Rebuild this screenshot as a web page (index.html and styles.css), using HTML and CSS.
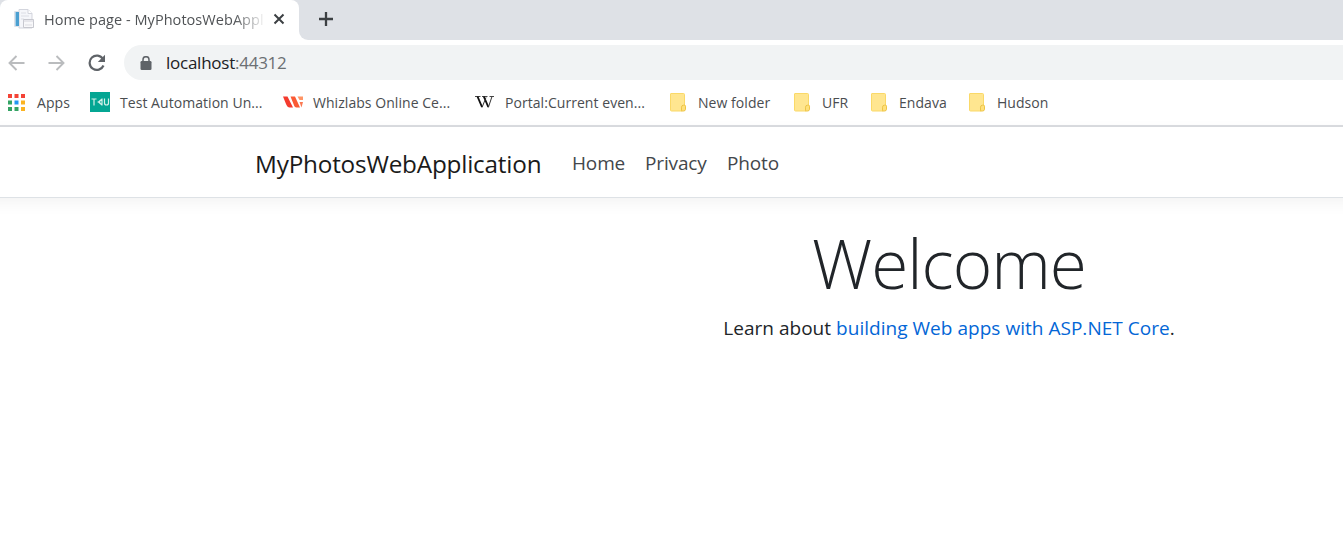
FILE: index.html
```html
<!DOCTYPE html>
<html lang="en">
<head>
<meta charset="utf-8">
<title>Home page - MyPhotosWebApplication</title>
<link rel="stylesheet" href="styles.css">
</head>
<body>
<div class="tabs">
  <div class="tab">
    <svg class="favicon" width="20" height="20" viewBox="0 0 20 20"><path d="M5 .5h9l4 4V19H5z" fill="#f5f6fa" stroke="#d3d5dd"/><path d="M14 .5v4h4" fill="#fff" stroke="#d3d5dd"/><path d="M7 4h5M7 7h8M7 10h3" stroke="#dcdee5"/><path d="M.5 2.500h4v15h-4z" fill="#fff" stroke="#dfe1e8"/><path d="M1.500 3h3.500v14H1.500z" fill="#4b9fd0"/><path d="M9.500 10.500h10v8h-10z" fill="#f8f8fa" stroke="#c7c8cf"/><path d="M9.500 12h10" stroke="#d4d4dc"/><path d="M11 16h7" stroke="#dddde2"/></svg>
    <span class="tab-title">Home page - MyPhotosWebAppl</span>
    <svg class="close" width="12" height="12" viewBox="0 0 12 12"><path d="M1.500 1.500l9 9M10.500 1.500l-9 9" stroke="#3c4043" stroke-width="2"/></svg>
  </div>
  <div class="strip"><svg width="16" height="16" viewBox="0 0 16 16"><path d="M8 1v14M1 8h14" stroke="#3c4043" stroke-width="2.300"/></svg></div>
</div>
<div class="toolbar">
  <svg class="arrow" width="18" height="18" viewBox="0 0 18 18"><path d="M16.500 9H2M8.500 2L1.500 9l7 7" fill="none" stroke="#babcbe" stroke-width="1.900"/></svg>
  <svg class="arrow forward" width="18" height="18" viewBox="0 0 18 18"><path d="M.5 9H15M8.500 2l7 7-7 7" fill="none" stroke="#babcbe" stroke-width="1.900"/></svg>
  <svg class="reload" width="18" height="18" viewBox="0 0 18 18"><path d="M15 5A7.200 7.200 0 1 0 15.500 11.500" fill="none" stroke="#5f6368" stroke-width="2.200"/><path d="M17 .8v7.200H9.800z" fill="#5f6368"/></svg>
  <div class="address">
    <svg width="12" height="14" viewBox="0 0 12 14"><path d="M3 6V3.700a3 3 0 0 1 6 0V6" fill="none" stroke="#5f6368" stroke-width="1.500"/><rect x=".5" y="5" width="11" height="9" rx="1.300" fill="#5f6368"/></svg>
    <span class="url">localhost<i>:44312</i></span>
  </div>
</div>
<div class="bookmarks">
  <div class="bm apps"><svg width="17" height="17" viewBox="0 0 17 17"><path d="M0 0h4v4H0zM6.500 0h4v4h-4zM13 0h4v4h-4z" fill="#f44336"/><path d="M0 6.500h4v4H0zM0 13h4v4H0zM6.500 13h4v4h-4z" fill="#34a364"/><path d="M6.500 6.500h4v4h-4z" fill="#2196f3"/><path d="M13 6.500h4v4h-4zM13 13h4v4h-4z" fill="#fbb321"/></svg><span>Apps</span></div>
  <div class="bm tau"><svg width="20" height="20" viewBox="0 0 20 20"><rect width="20" height="20" fill="#04a693"/><path d="M1.500 7h5M4 7v6.500M7.500 10h3M12 6.500v7M12 7L8.500 10l3.500 3M14.500 6.500V11q0 2 2 2t2-2V6.500" fill="none" stroke="#d5f0e9" stroke-width="1.200"/></svg><span>Test Automation Un...</span></div>
  <div class="bm whiz"><svg width="21" height="12" viewBox="0 0 21 12"><path d="M0 .5h4.500L10 11.500H6.500Q4.500 11.500 3 8z" fill="#f43b2e"/><path d="M7.500.5H12L17 11.500h-3.500Q11.500 11.500 10.500 8z" fill="#fa5a35"/><path d="M14.500.5H20v3.500h-3.500z" fill="#ff9565"/><path d="M16.500 6h3.500L18.500 11.500z" fill="#fb7952"/></svg><span>Whizlabs Online Ce...</span></div>
  <div class="bm wiki"><svg width="20" height="14" viewBox="0 0 20 14"><path d="M0 1.500h5.500M7 1.500h5.500M14.500 1.500H19" stroke="#333" stroke-width=".9"/><path d="M2.500 1.500l4.500 10.500M8.800 1.500l4.500 10.500" fill="none" stroke="#111" stroke-width="1.900"/><path d="M7 12.500l4-10M13.300 12.500L17 1.500" fill="none" stroke="#333"/></svg><span>Portal:Current even...</span></div>
  <div class="bm f1"><svg class="folder" width="17" height="19" viewBox="0 0 17 19"><path d="M1 .5h12.500q1 0 1 1v11.500L12 18H1.500q-1 0-1-1V1q0-.5.500-.5z" fill="#ffe690" stroke="#fad968"/><path d="M11.500 17.500v-3.300q0-2 2-2h1q1 0 1 1v3q0 1.800-2 1.800h-2z" fill="#ffe07a" stroke="#edc446"/></svg><span>New folder</span></div>
  <div class="bm f2"><svg class="folder" width="17" height="19" viewBox="0 0 17 19"><path d="M1 .5h12.500q1 0 1 1v11.500L12 18H1.500q-1 0-1-1V1q0-.5.500-.5z" fill="#ffe690" stroke="#fad968"/><path d="M11.500 17.500v-3.300q0-2 2-2h1q1 0 1 1v3q0 1.800-2 1.800h-2z" fill="#ffe07a" stroke="#edc446"/></svg><span>UFR</span></div>
  <div class="bm f3"><svg class="folder" width="17" height="19" viewBox="0 0 17 19"><path d="M1 .5h12.500q1 0 1 1v11.500L12 18H1.500q-1 0-1-1V1q0-.5.500-.5z" fill="#ffe690" stroke="#fad968"/><path d="M11.500 17.500v-3.300q0-2 2-2h1q1 0 1 1v3q0 1.800-2 1.800h-2z" fill="#ffe07a" stroke="#edc446"/></svg><span>Endava</span></div>
  <div class="bm f4"><svg class="folder" width="17" height="19" viewBox="0 0 17 19"><path d="M1 .5h12.500q1 0 1 1v11.500L12 18H1.500q-1 0-1-1V1q0-.5.500-.5z" fill="#ffe690" stroke="#fad968"/><path d="M11.500 17.500v-3.300q0-2 2-2h1q1 0 1 1v3q0 1.800-2 1.800h-2z" fill="#ffe07a" stroke="#edc446"/></svg><span>Hudson</span></div>
</div>
<header class="navbar">
  <a class="brand">MyPhotosWebApplication</a>
  <nav><a class="home">Home</a><a class="privacy">Privacy</a><a class="photo">Photo</a></nav>
</header>
<main>
  <h1>Welcome</h1>
  <p>Learn about <a>building Web apps with ASP.NET Core</a>.</p>
</main>
</body>
</html>
```
FILE: styles.css
```css
* { box-sizing: border-box; }
body { margin: 0; height: 557px; overflow: hidden; background: #fff; color: #212529; font-family: "Open Sans", "Noto Sans", sans-serif; white-space: nowrap; }
svg { display: block; flex: none; }
.tabs { display: flex; height: 40px; background: linear-gradient(#dee1e6 20px, #fff 20px); }
.tab { display: flex; align-items: center; width: 299px; padding: 0 0 2px 14px; background: #fff; border-radius: 8px 8px 0 0; }
.strip { flex: 1; display: flex; align-items: center; padding: 0 0 2px 19px; background: #dee1e6; border-bottom-left-radius: 9px; }
.tab-title { width: 220px; margin-left: 10px; overflow: hidden; font-size: 14.500px; letter-spacing: .05px; color: #505356; -webkit-mask-image: linear-gradient(90deg, #000 190px, transparent 222px); }
.close { margin-left: 9px; }
.toolbar { display: flex; align-items: center; height: 45px; padding-left: 8px; }
.forward { margin-left: 22px; }
.reload { margin-left: 22px; }
.address { display: flex; align-items: center; flex: 1; height: 35px; margin-left: 18px; padding-left: 16px; background: #f1f3f4; border-radius: 18px 0 0 18px; }
.url { margin-left: 14px; font-size: 17px; letter-spacing: -.25px; color: #202124; }
.url i { font-style: normal; color: #6b6f73; }
.bookmarks { display: flex; height: 42px; padding: 0 0 6px 8px; border-bottom: 2px solid #dadce0; }
.bm { display: flex; align-items: center; font-size: 14px; color: #4a4d50; }
.bm span { margin-left: 10px; letter-spacing: .05px; }
.apps { width: 82px; }
.apps span { margin-left: 12px; }
.tau { width: 193px; }
.whiz { width: 192px; }
.whiz span { margin-left: 9px; }
.wiki { width: 195px; }
.f1 { width: 124px; }
.f2 { width: 77px; }
.f3 { width: 98px; }
.bm .folder + span { margin-left: 11px; }
.navbar { display: flex; align-items: center; height: 71px; margin: 0 -20px; padding-left: 275px; border-bottom: 1px solid #dee2e6; box-shadow: 0 5px 15px rgba(0,0,0,.05); }
.brand { width: 317px; font-size: 24.300px; letter-spacing: -.2px; color: #1a1a1a; padding-top: 2px; }
nav { display: flex; font-size: 19px; color: #43474b; padding-top: 1px; }
nav a { letter-spacing: -.15px; }
.home { width: 73px; }
.privacy { width: 82px; }
main { display: flex; flex-direction: column; align-items: center; padding-left: 555px; }
h1 { margin: 18px 0 0; font-size: 67.500px; line-height: 94px; font-weight: 300; letter-spacing: -1px; }
p { margin: 3px 0 0; font-size: 19px; line-height: 30px; letter-spacing: .03px; }
p a { color: #0366d6; }
```
